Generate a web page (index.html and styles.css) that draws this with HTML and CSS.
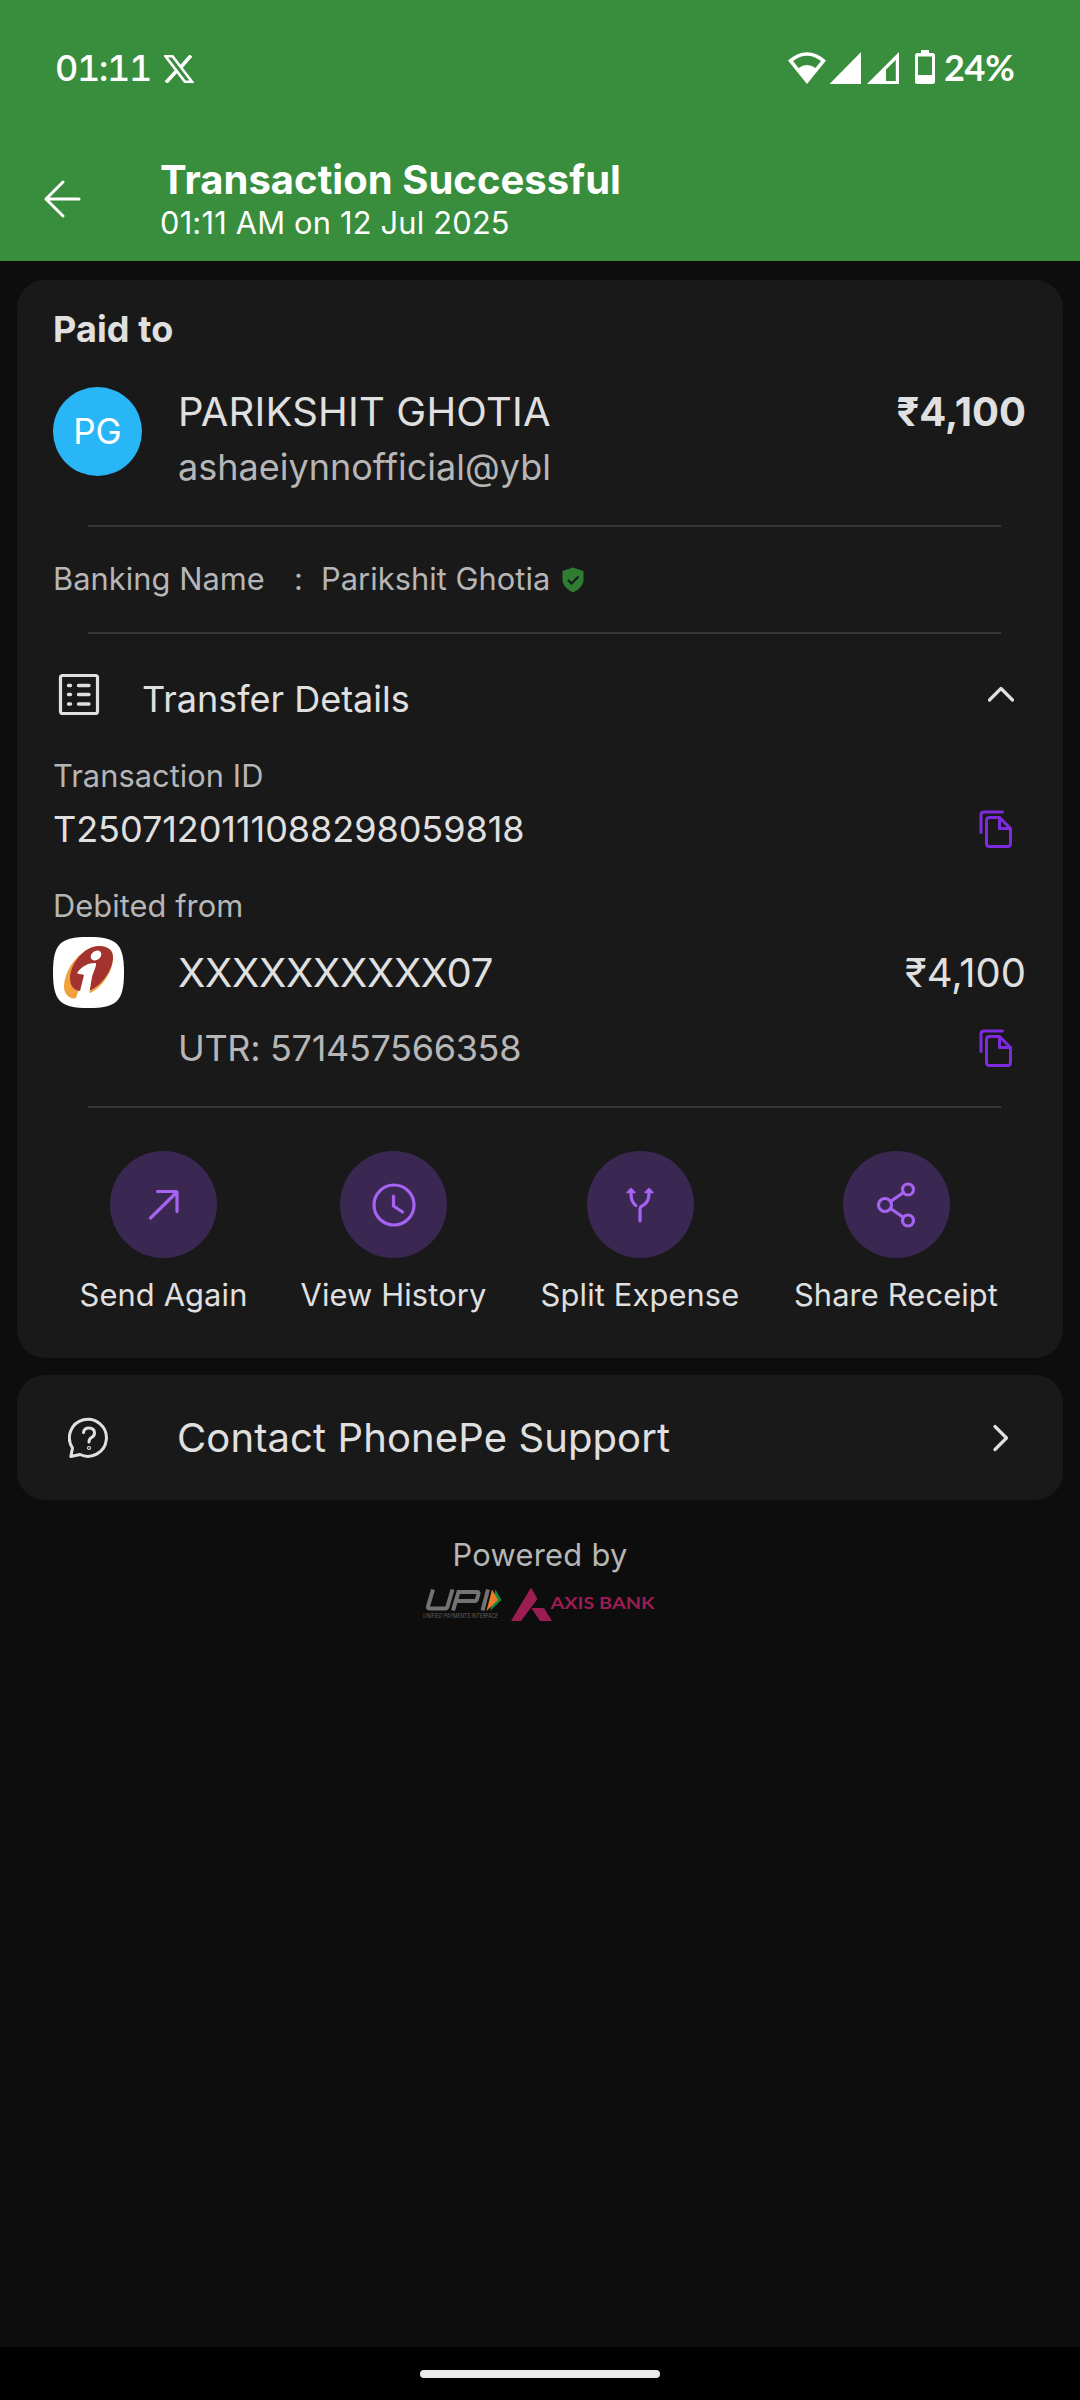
FILE: index.html
```html
<!DOCTYPE html>
<html lang="en">
<head>
<meta charset="utf-8">
<title>Transaction Successful</title>
<link rel="stylesheet" href="styles.css">
</head>
<body>
<div class="screen">
  <header class="header">
    <div class="status">
      <span class="clock">01:11</span>
      <svg class="x-logo" width="30" height="28" viewBox="0 0 30 28"><path d="M1.500 1.200H8.500L28 26.800H21Z" fill="none" stroke="#fff" stroke-width="2.600"/><path d="M27 .5L16.500 12.500M12.700 15.800L2 27.500" fill="none" stroke="#fff" stroke-width="3.600"/></svg>
      <svg class="signals" width="150" height="36" viewBox="0 0 150 36" fill="#fff">
        <path fill-rule="evenodd" d="M0 10.500Q19-6 38 10.500L19 34ZM5 11L10.500 18Q19 12 27.500 18L33 11Q19 .5 5 11Z"/>
        <path d="M73 2V34H41.500Z"/>
        <path fill-rule="evenodd" d="M111 2V34H79ZM107.800 10L98 19.500V31H107.800Z"/>
        <path fill-rule="evenodd" d="M133 0H141V3H144.500Q147 3 147 5.500V31.500Q147 34 144.500 34H129.500Q127 34 127 31.500V5.500Q127 3 129.500 3H133ZM130 6.500V25H144V6.500Z"/>
      </svg>
      <span class="percent">24%</span>
    </div>
    <div class="title-bar">
      <svg class="back" width="38" height="40" viewBox="0 0 38 40"><path d="M20 3L3 20L20 37M3 20H36" fill="none" stroke="#fff" stroke-width="3" stroke-linecap="round" stroke-linejoin="round"/></svg>
      <div class="titles">
        <h1 class="title">Transaction Successful</h1>
        <div class="subtitle">01:11 AM on 12 Jul 2025</div>
      </div>
    </div>
  </header>

  <main class="content">
    <section class="card receipt">
      <h2 class="paid-to">Paid to</h2>
      <div class="payee">
        <div class="avatar">PG</div>
        <div class="payee-text">
          <div class="name">PARIKSHIT GHOTIA</div>
          <div class="vpa">ashaeiynnofficial@ybl</div>
        </div>
        <div class="amount">₹4,100</div>
      </div>
      <div class="rule"></div>
      <div class="banking">
        <span class="bank-label">Banking Name</span><span class="colon">:</span><span class="bank-name">Parikshit Ghotia</span>
        <svg width="22" height="26" viewBox="0 0 22 26"><path d="M11 .5L21.500 4V14Q20.500 21 11 25.500Q1.500 21 .5 14V4Z" fill="#2e7d32"/><path d="M6 13L9.500 16.500L16.500 9.500" fill="none" stroke="#191919" stroke-width="2"/></svg>
      </div>
      <div class="rule"></div>
      <div class="details-head">
        <svg class="list-icon" width="42" height="42" viewBox="0 0 42 42" fill="none" stroke="#e0e0e0"><rect x="2.500" y="2.500" width="37" height="38" rx="2" stroke-width="3.200"/><path d="M10.500 12.500H12.500M10.500 21.500H12.500M10.500 31H12.500M20.500 12.500H31M20.500 21.500H31M20.500 31H31" stroke-width="3.400" stroke-linecap="round"/></svg>
        <span class="details-title">Transfer Details</span>
        <svg class="chev-up" width="28" height="18" viewBox="0 0 28 18"><path d="M2.500 15L14 3.500L25.500 15" fill="none" stroke="#e0e0e0" stroke-width="3.200" stroke-linecap="round" stroke-linejoin="round"/></svg>
      </div>
      <div class="label">Transaction ID</div>
      <div class="row txn-row">
        <span class="txn-id">T2507120111088298059818</span>
        <svg class="copy" width="34" height="39" viewBox="0 0 34 39"><use href="#copy-shape"/></svg>
      </div>
      <div class="label debit-label">Debited from</div>
      <div class="row debit-row">
        <svg class="bank-logo" width="71" height="71" viewBox="0 0 71 71">
          <path d="M35.500 0C64 0 71 7 71 35.500S64 71 35.500 71S0 64 0 35.500S7 0 35.500 0Z" fill="#fff"/>
          <path d="M49 9C30 9 12 29 11 49C10.500 58 18 63 23 61L26 52L37 56C49 51 60 34 60 21Z" fill="#f0a33c"/>
          <path d="M46 9C31 9 17 27 17 41C17 49 21 54 28 54L38 53C50 47 60 32 60 20C60 13 55 9 46 9Z" fill="#a3332f"/>
          <path d="M24 36C29 29 35 26 42 26C45 26 41 33 39 40L36 58L35 63H23L26 58L31 38C29 37 27 38 24 36Z" fill="#fff"/>
          <ellipse cx="43" cy="18.500" rx="5.800" ry="4.400" transform="rotate(-38 43 18.500)" fill="#fff"/>
        </svg>
        <span class="account">XXXXXXXXXX07</span>
        <span class="debit-amount">₹4,100</span>
      </div>
      <div class="row utr-row">
        <span class="utr">UTR: 571457566358</span>
        <svg class="copy" width="34" height="39" viewBox="0 0 34 39"><g id="copy-shape" fill="none" stroke="#7e2be0" stroke-width="3" stroke-linecap="round" stroke-linejoin="round"><path d="M23.500 2H5Q2 2 2 5V22.500"/><path d="M20 7.500H10.500Q7.500 7.500 7.500 10.500V33.500Q7.500 36.500 10.500 36.500H28.500Q31.500 36.500 31.500 33.500V18.500L20.500 7.500V18.500H31.500"/></g></svg>
      </div>
      <div class="rule"></div>
      <div class="actions">
        <div class="action send"><div class="circle"><svg width="48" height="48" viewBox="0 0 48 48"><path d="M10.500 37L37 11M17.500 10.500H35.500Q37 10.500 37 12V30.500"/></svg></div><span>Send Again</span></div>
        <div class="action history"><div class="circle"><svg width="48" height="48" viewBox="0 0 48 48"><circle cx="24" cy="24" r="20"/><path d="M23.500 15V25L32.500 31"/></svg></div><span>View History</span></div>
        <div class="action split"><div class="circle"><svg width="48" height="48" viewBox="0 0 48 48"><path d="M24 40V28Q24 26 26 25Q33 22 33 12M15 12Q15 21 19.800 24.500"/><path d="M11 11.500L15 7.500L19 11.500ZM29 11.500L33 7.500L37 11.500Z" fill="#a663f2" stroke-width="1.500"/></svg></div><span>Split Expense</span></div>
        <div class="action share"><div class="circle"><svg width="48" height="48" viewBox="0 0 48 48"><circle cx="13" cy="24" r="6.500"/><circle cx="36" cy="8.500" r="5.500"/><circle cx="36" cy="39.500" r="5.500"/><path d="M18.500 20.500L31.500 11.500M18.500 27.500L31.500 36.500"/></svg></div><span>Share Receipt</span></div>
      </div>
    </section>

    <section class="card support">
      <svg class="help" width="42" height="42" viewBox="0 0 42 42" fill="none" stroke="#e0e0e0" stroke-width="3" stroke-linecap="round" stroke-linejoin="round"><path d="M2.800 39.500L4.500 31A18.500 18.500 0 1 1 12 37.500Z"/><path d="M15.500 15.500Q16 11 21 11Q26.500 11 26.500 16Q26.500 19 23.500 20.500Q21 22 21 25"/><circle cx="21" cy="31" r=".6"/></svg>
      <span class="support-text">Contact PhonePe Support</span>
      <svg class="chev-right" width="18" height="28" viewBox="0 0 18 28"><path d="M3 2.500L14.500 14L3 25.500" fill="none" stroke="#e0e0e0" stroke-width="3.200" stroke-linecap="round" stroke-linejoin="round"/></svg>
    </section>

    <footer class="powered">
      <div class="powered-text">Powered by</div>
      <svg class="brands" width="234" height="36" viewBox="0 0 234 36">
        <g fill="none" stroke="#727374" stroke-width="4"><path d="M10 2.500L5 19.500Q4.500 21.500 7 21.500H22Q24 21.500 24.500 19.500L29.500 2.500"/><path d="M30 23.500L35.500 5H54Q56 5 55.500 7L54 12Q53.500 14 51.500 14H34"/><path d="M65 2.500L59.500 23.500"/></g>
        <path d="M72.500 2.500L78.500 13L67 24Z" fill="#128a45"/>
        <path d="M69 2.500L75 13L63.500 24Z" fill="#ee7b27"/>
        <text class="upi-tag" x="0" y="31" textLength="75" lengthAdjust="spacingAndGlyphs">UNIFIED PAYMENTS INTERFACE</text>
        <path d="M108 .5L114.500 12L98 34H88ZM108.500 21H121L129 34H117Z" fill="#9c1d52"/>
        <text class="axis-name" x="127.500" y="21.500" textLength="104" lengthAdjust="spacingAndGlyphs">AXIS BANK</text>
      </svg>
    </footer>
  </main>
  <nav class="gesture"><div class="pill"></div></nav>
</div>
</body>
</html>
```
FILE: styles.css
```css
* { box-sizing: border-box; }
body { margin: 0; background: #0d0d0d; font-family: Inter, "Liberation Sans", sans-serif; color: #e0e0e0; }
svg { display: block; flex: none; }
h1, h2 { margin: 0; }
span, .name, .vpa, .title, .subtitle { white-space: nowrap; flex: none; }
.screen { width: 1080px; height: 2400px; display: flex; flex-direction: column; }

.header { height: 261px; background: #388e3c; color: #fff; }
.status { display: flex; height: 136px; padding: 50px 55px 0 55px; }
.clock { font-size: 36px; line-height: 36px; width: 109px; font-weight: 500; font-variant-numeric: tabular-nums; letter-spacing: -1.4px; }
.x-logo { margin-top: 5px; }
.signals { margin-left: 594px; }
.percent { font-family: Lato, sans-serif; font-size: 36px; line-height: 34px; font-weight: 700; margin-left: 6px; letter-spacing: -0.3px; }
.title-bar { display: flex; padding: 22px 0 0 43px; }
.back { margin-top: 21px; }
.titles { margin-left: 79px; }
.title { font-size: 40px; line-height: 44px; font-weight: 700; letter-spacing: 0.03px; }
.subtitle { font-size: 30.8px; line-height: 42px; letter-spacing: 0.2px; }

.content { flex: 1; padding: 19px 17px 0; }
.card { background: #191919; border-radius: 28px; }
.receipt { height: 1078px; padding: 0 37px 0 36px; display: flex; flex-direction: column; }
.paid-to { font-size: 36px; line-height: 44px; font-weight: 700; margin-top: 27px; letter-spacing: 0.1px; }
.payee { display: flex; height: 138px; margin-top: 36px; }
.avatar { width: 89px; height: 89px; border-radius: 50%; background: #29b6f6; color: #fff; font-size: 35px; line-height: 89px; text-align: center; }
.payee-text { margin-left: 36px; padding-top: 1px; }
.name { font-size: 40px; line-height: 48px; letter-spacing: 0.2px; }
.vpa { font-size: 36px; line-height: 44px; margin-top: 9px; color: #b6b6b6; }
.amount { margin: 1px 0 0 auto; font-size: 40px; line-height: 48px; font-weight: 700; }
.rule { height: 2px; background: #363636; margin: 0 25px 0 35px; flex: none; }
.banking { display: flex; align-items: center; height: 105px; font-size: 30.8px; line-height: 40px; letter-spacing: 0.05px; color: #b6b6b6; }
.banking span { padding-bottom: 2px; }
.bank-label { width: 241px; }
.colon { width: 27px; }
.bank-name { width: 241px; }
.details-head { display: flex; height: 121px; padding-top: 39px; }
.list-icon { margin-left: 5px; }
.details-title { font-size: 36px; line-height: 50px; margin: 1px 0 0 42px; }
.chev-up { margin: 12px 11px 0 auto; }
.label { font-size: 30.8px; line-height: 42px; height: 40px; color: #b6b6b6; letter-spacing: 0.05px; }
.debit-label { line-height: 40px; }
.row { display: flex; }
.txn-row { height: 91px; }
.txn-id { font-size: 36px; line-height: 44px; margin-top: 12px; letter-spacing: -0.05px; }
.copy { margin: 15px 13px 0 auto; }
.debit-row { height: 90px; margin-top: 11px; }
.account, .debit-amount { font-size: 40px; line-height: 72px; }
.account { margin-left: 54px; letter-spacing: -0.3px; }
.debit-amount { margin-left: auto; }
.utr-row { height: 79px; }
.utr { font-size: 36px; line-height: 44px; margin: -1px 0 0 125px; color: #b6b6b6; letter-spacing: -0.33px; }
.utr-row .copy { margin-top: 2px; }
.actions { display: flex; padding-top: 43px; }
.action { display: flex; flex: none; flex-direction: column; align-items: center; font-size: 30.8px; line-height: 40px; gap: 17px; letter-spacing: 0.15px; }
.send { width: 221px; }
.history { width: 239px; }
.split { width: 254px; }
.share { width: 258px; }
.circle { width: 107px; height: 107px; border-radius: 50%; background: #3b2852; display: flex; align-items: center; justify-content: center; }
.circle svg { fill: none; stroke: #a663f2; stroke-width: 3.2; stroke-linecap: round; stroke-linejoin: round; }

.support { height: 125px; margin-top: 17px; display: flex; align-items: center; padding: 0 53px 0 51px; }
.support-text { font-size: 40px; margin-left: 67px; letter-spacing: 0.1px; }
.chev-right { margin-left: auto; }

.powered { display: flex; flex-direction: column; align-items: center; padding-top: 35px; }
.powered-text { font-size: 30.8px; line-height: 40px; color: #b6b6b6; letter-spacing: 0.3px; }
.brands { margin-top: 12px; }
.upi-tag { font: italic 6px Inter, sans-serif; fill: #66615f; }
.axis-name { font: 700 17px Lato, sans-serif; fill: #9c1d52; }
.gesture { height: 53px; background: #000; padding-top: 23px; }
.pill { width: 240px; height: 8px; border-radius: 4px; background: #ebebeb; margin: 0 auto; }
```
